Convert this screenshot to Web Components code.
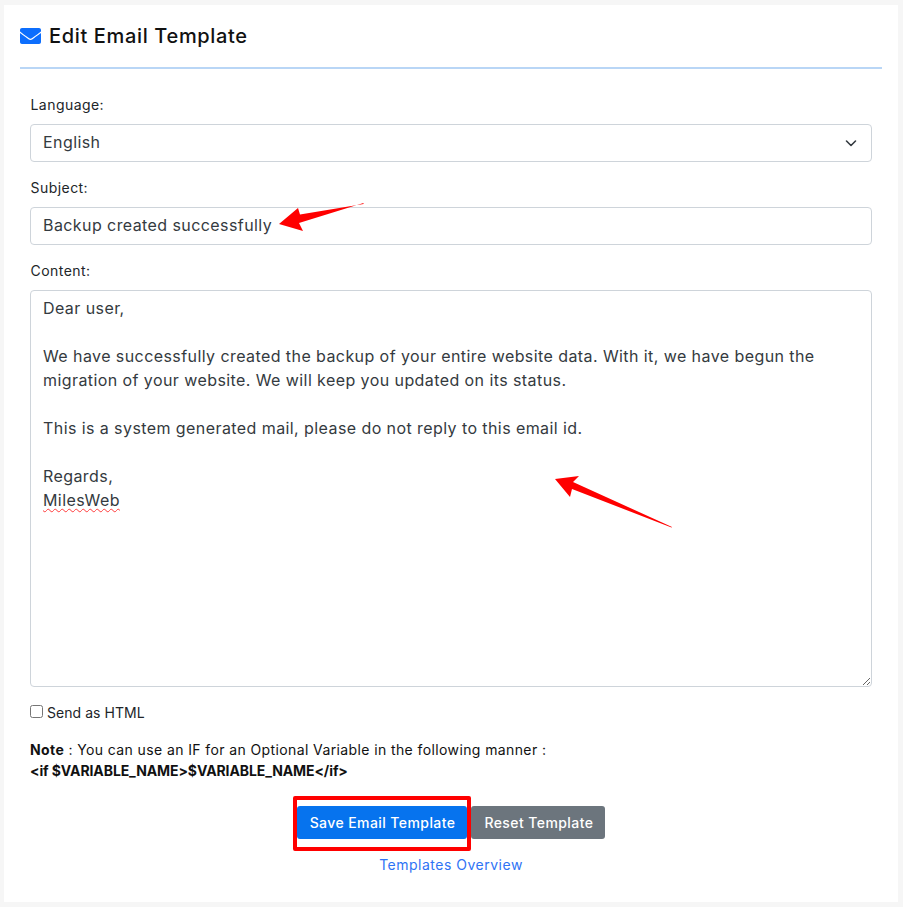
<!DOCTYPE html>
<html lang="en">
<head>
<meta charset="utf-8">
<title>Edit Email Template</title>
<style>
  html, body { margin: 0; background: #f6f6f6; }
  body {
    padding: 5px 5px 5px 4px;
    font-family: Inter, "Liberation Sans", sans-serif;
    color: #212529;
  }
</style>
</head>
<body>
<template-card heading="Edit Email Template">
  <form-field label="Language:"><select-box value="English"></select-box></form-field>
  <form-field label="Subject:"><text-box>Backup created successfully</text-box></form-field>
  <form-field label="Content:">
    <area-box>Dear user,

We have successfully created the backup of your entire website data. With it, we have begun the
migration of your website. We will keep you updated on its status.

This is a system generated mail, please do not reply to this email id.

Regards,
<misspelled-word>MilesWeb</misspelled-word></area-box>
  </form-field>
  <check-line>Send as HTML</check-line>
  <note-block></note-block>
  <action-bar>
    <app-button marked>Save Email Template</app-button>
    <app-button variant="secondary">Reset Template</app-button>
  </action-bar>
  <link-line>Templates Overview</link-line>
  <annotation-arrow slot="overlay" x="279" y="202" w="85" h="30" points="84.5,1 84.5,2 21,12.5 19,6 0,22 24,29 20,21"></annotation-arrow>
  <annotation-arrow slot="overlay" x="555" y="476" w="118" h="52" points="0,3 24,0 18,6 117,51 116.5,51.5 17,13 15,21"></annotation-arrow>
</template-card>

<script>
// shared text tuning, the reference font is wider than anything installed
const TEXT_16 = 'font-size: 16px; letter-spacing: 0.42px;';
const TEXT_14 = 'font-size: 14px; letter-spacing: 0.39px;';

function makeElement(name, html) {
  customElements.define(name, class extends HTMLElement {
    constructor() {
      super();
      this.attachShadow({ mode: 'open' });
      this.shadowRoot.innerHTML = typeof html === 'function' ? html(this) : html;
    }
  });
}

customElements.define('template-card', class extends HTMLElement {
  constructor() {
    super();
    this.attachShadow({ mode: 'open' });
    this.shadowRoot.innerHTML = `
      <style>
        :host { display: block; position: relative; background: #fff; height: 897px; box-sizing: border-box; padding: 16px 16px 0; }
        header {
          display: flex; align-items: center; gap: 8px; height: 30px;
          padding-bottom: 16px; border-bottom: 2px solid #b9d6f6; margin-bottom: 26px;
        }
        h1 { margin: 0; font-size: 20px; line-height: 30px; font-weight: 500; letter-spacing: 0.65px; color: #111; }
        svg { width: 21px; height: 16px; display: block; }
        .body { padding: 0 10px; }
      </style>
      <header>
        <svg viewBox="0 0 512 390" preserveAspectRatio="none" fill="#0d6efd"><path d="M502 129c4-3 10 0 10 5v208c0 27-21 48-48 48H48c-27 0-48-21-48-48V134c0-5 6-8 10-5 22 17 52 39 154 113 21 15 57 48 92 48s72-33 92-48c102-74 132-96 154-113zM256 261c23 0 57-29 74-41 133-97 143-105 174-129 6-5 8-12 8-19V48c0-27-21-48-48-48H48C21 0 0 21 0 48v24c0 7 2 14 8 19 31 24 41 32 174 129 17 12 51 41 74 41z"/></svg>
        <h1></h1>
      </header>
      <div class="body"><slot></slot></div>
      <slot name="overlay"></slot>`;
    this.shadowRoot.querySelector('h1').textContent = this.getAttribute('heading');
  }
});

customElements.define('form-field', class extends HTMLElement {
  constructor() {
    super();
    this.attachShadow({ mode: 'open' });
    this.shadowRoot.innerHTML = `
      <style>
        :host { display: block; margin-bottom: 16px; }
        label { display: block; ${TEXT_14} letter-spacing: 0.45px; line-height: 20px; margin-bottom: 9px; padding-left: 0.5px; color: #212529; }
      </style>
      <label></label>
      <slot></slot>`;
    this.shadowRoot.querySelector('label').textContent = this.getAttribute('label');
  }
});

const boxStyle = `
  display: block; box-sizing: border-box;
  border: 1px solid #ced4da; border-radius: 4px; background: #fff;
  padding: 5px 12px 7px; ${TEXT_16} line-height: 24px; color: #343a40;`;

makeElement('text-box', `
  <style>:host { ${boxStyle} height: 38px; white-space: nowrap; }</style>
  <slot></slot>`);

makeElement('select-box', (el) => `
  <style>
    :host { ${boxStyle} height: 38px; }
    .row { display: flex; justify-content: space-between; align-items: center; }
    svg { width: 16px; height: 16px; position: relative; top: 1px; }
  </style>
  <div class="row" role="combobox">
    <span>${el.getAttribute('value')}</span>
    <svg viewBox="0 0 16 16" fill="none" stroke="#343a40" stroke-width="1.6" stroke-linecap="round" stroke-linejoin="round"><path d="M3.5 6l4.5 4.5 4.5-4.5"/></svg>
  </div>`);

makeElement('area-box', `
  <style>
    :host { ${boxStyle} height: 397px; resize: vertical; overflow: auto; }
    .text { white-space: pre-wrap; }
  </style>
  <div class="text"><slot></slot></div>`);

// no whitespace in this template, it sits inside pre-wrap text
makeElement('misspelled-word', `<style>:host { text-decoration: underline wavy #ff3b3b 1px; text-underline-offset: 2px; }</style><slot></slot>`);

makeElement('check-line', `
  <style>
    :host { display: flex; align-items: center; gap: 4px; height: 21px; margin-top: -1px; ${TEXT_14} letter-spacing: 0.05px; color: #212529; }
    i { width: 11px; height: 11px; border: 1px solid #767676; border-radius: 2.5px; background: #fff; display: block; margin-bottom: 2px; }
  </style>
  <i></i><slot></slot>`);

makeElement('note-block', `
  <style>
    :host { display: block; margin-top: 16px; ${TEXT_14} line-height: 21px; color: #111; }
    b { font-weight: 700; }
    .code { letter-spacing: -0.1px; }
  </style>
  <div><b>Note</b> : You can use an IF for an Optional Variable in the following manner :</div>
  <div class="code"><b>&lt;if $VARIABLE_NAME&gt;$VARIABLE_NAME&lt;/if&gt;</b></div>`);

makeElement('action-bar', `
  <style>:host { display: flex; justify-content: center; gap: 4px; margin-top: 25px; }</style>
  <slot></slot>`);

makeElement('app-button', (el) => `
  <style>
    :host { display: block; position: relative; height: 33px; box-sizing: border-box; padding: 0 12px 0 13px; border-radius: 3px;
      background: ${el.getAttribute('variant') === 'secondary' ? '#6c757d' : '#0673ee'};
      color: #fff; ${TEXT_14} letter-spacing: 0.42px; font-weight: 500; line-height: 33px; white-space: nowrap; }
    .mark { position: absolute; left: -4px; right: -4px; top: -10px; bottom: -12px; border: 4px solid #ff0000; border-radius: 2px; }
  </style>
  <slot></slot>
  ${el.hasAttribute('marked') ? '<div class="mark"></div>' : ''}`);

makeElement('link-line', `
  <style>
    :host { display: block; text-align: center; margin-top: 15px; ${TEXT_14} letter-spacing: 0.5px; line-height: 21px; color: #2f73f5; }
  </style>
  <slot></slot>`);

// red arrows painted over the shot, x and y are page coordinates
makeElement('annotation-arrow', (el) => `
  <style>
    :host { position: absolute; left: ${el.getAttribute('x') - 4}px; top: ${el.getAttribute('y') - 5}px; display: block; line-height: 0; }
  </style>
  <svg width="${el.getAttribute('w')}" height="${el.getAttribute('h')}"><polygon fill="#ff0000" points="${el.getAttribute('points')}"/></svg>`);
</script>
</body>
</html>
